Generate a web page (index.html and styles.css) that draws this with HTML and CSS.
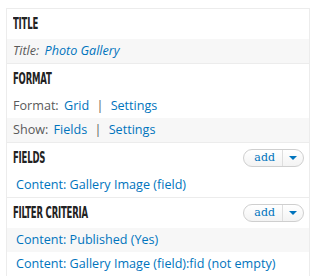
FILE: index.html
```html
<!DOCTYPE html>
<html lang="en">
  <head>
    <meta charset="UTF-8" />
    <title>Views display</title>
    <link rel="stylesheet" href="styles.css">
  </head>
  <body>
    <div class="display-box">
      <div class="section">
        <div class="section-head"><h3><span>Title</span></h3></div>
        <div class="row even">
          <em class="label">Title:</em> <a href="#" class="em">Photo Gallery</a>
        </div>
      </div>

      <div class="section">
        <div class="section-head"><h3><span>Format</span></h3></div>
        <div class="row">
          <span class="label">Format:</span> <a href="#">Grid</a>
          <span class="sep">|</span> <a href="#">Settings</a>
        </div>
        <div class="row even">
          <span class="label">Show:</span> <a href="#">Fields</a>
          <span class="sep">|</span> <a href="#">Settings</a>
        </div>
      </div>

      <div class="section">
        <div class="section-head">
          <h3><span>Fields</span></h3>
          <div class="add-button">
            <a href="#" class="add">add</a>
            <span class="arrow"></span>
          </div>
        </div>
        <div class="row item"><a href="#">Content: Gallery Image (field)</a></div>
      </div>

      <div class="section">
        <div class="section-head">
          <h3><span>Filter criteria</span></h3>
          <div class="add-button">
            <a href="#" class="add">add</a>
            <span class="arrow"></span>
          </div>
        </div>
        <div class="row item even"><a href="#">Content: Published (Yes)</a></div>
        <div class="row item"><a href="#">Content: Gallery Image (field):fid (not empty)</a></div>
      </div>
    </div>
  </body>
</html>
```

FILE: styles.css
```css
body {
  margin: 0;
  background: #ffffff;
  font-family: "Open Sans", sans-serif;
  font-size: 12.6px;
  color: #5a5a5a;
}

.display-box {
  width: 304px;
  box-sizing: border-box;
  margin: 8px 0 0 6px;
  border: 1px solid #ececec;
  border-bottom: none;
}

.section + .section {
  border-top: 1px solid #ececec;
}

.section-head {
  height: 30px;
  display: flex;
  align-items: center;
  justify-content: space-between;
  padding: 0 5px 0 6px;
}

.section-head h3 {
  margin: 0;
  font-family: "DejaVu Sans Condensed", "DejaVu Sans", sans-serif;
  font-weight: bold;
  font-size: 15px;
  color: #222;
  text-transform: uppercase;
  line-height: 1;
}

.section-head h3 span {
  display: inline-block;
  transform: scaleX(0.63);
  transform-origin: left center;
  letter-spacing: -0.3px;
}

.row {
  height: 24px;
  line-height: 24px;
  padding: 0 6px;
  white-space: nowrap;
}

.row.even {
  background: #f7f7f7;
}

.row.item {
  padding-left: 9px;
}

.label {
  margin-right: 2px;
}

.sep {
  margin: 0 4px 0 4px;
}

a {
  color: #0074bd;
  text-decoration: none;
}

.em {
  font-style: italic;
}

.add-button {
  display: flex;
  align-items: center;
  height: 16px;
  border: 1px solid #cfcfcf;
  border-radius: 9px;
  background: linear-gradient(#ffffff, #f3f3f3);
  padding: 0 6px 0 10px;
  margin-top: -1px;
}

.add-button .add {
  font-family: "DejaVu Serif", "Liberation Serif", serif;
  font-size: 11px;
  line-height: 16px;
  padding-right: 7px;
  border-right: 1px solid #dedede;
  margin-right: 6px;
}

.arrow {
  width: 0;
  height: 0;
  border-left: 4px solid transparent;
  border-right: 4px solid transparent;
  border-top: 4px solid #0074bd;
}
```
